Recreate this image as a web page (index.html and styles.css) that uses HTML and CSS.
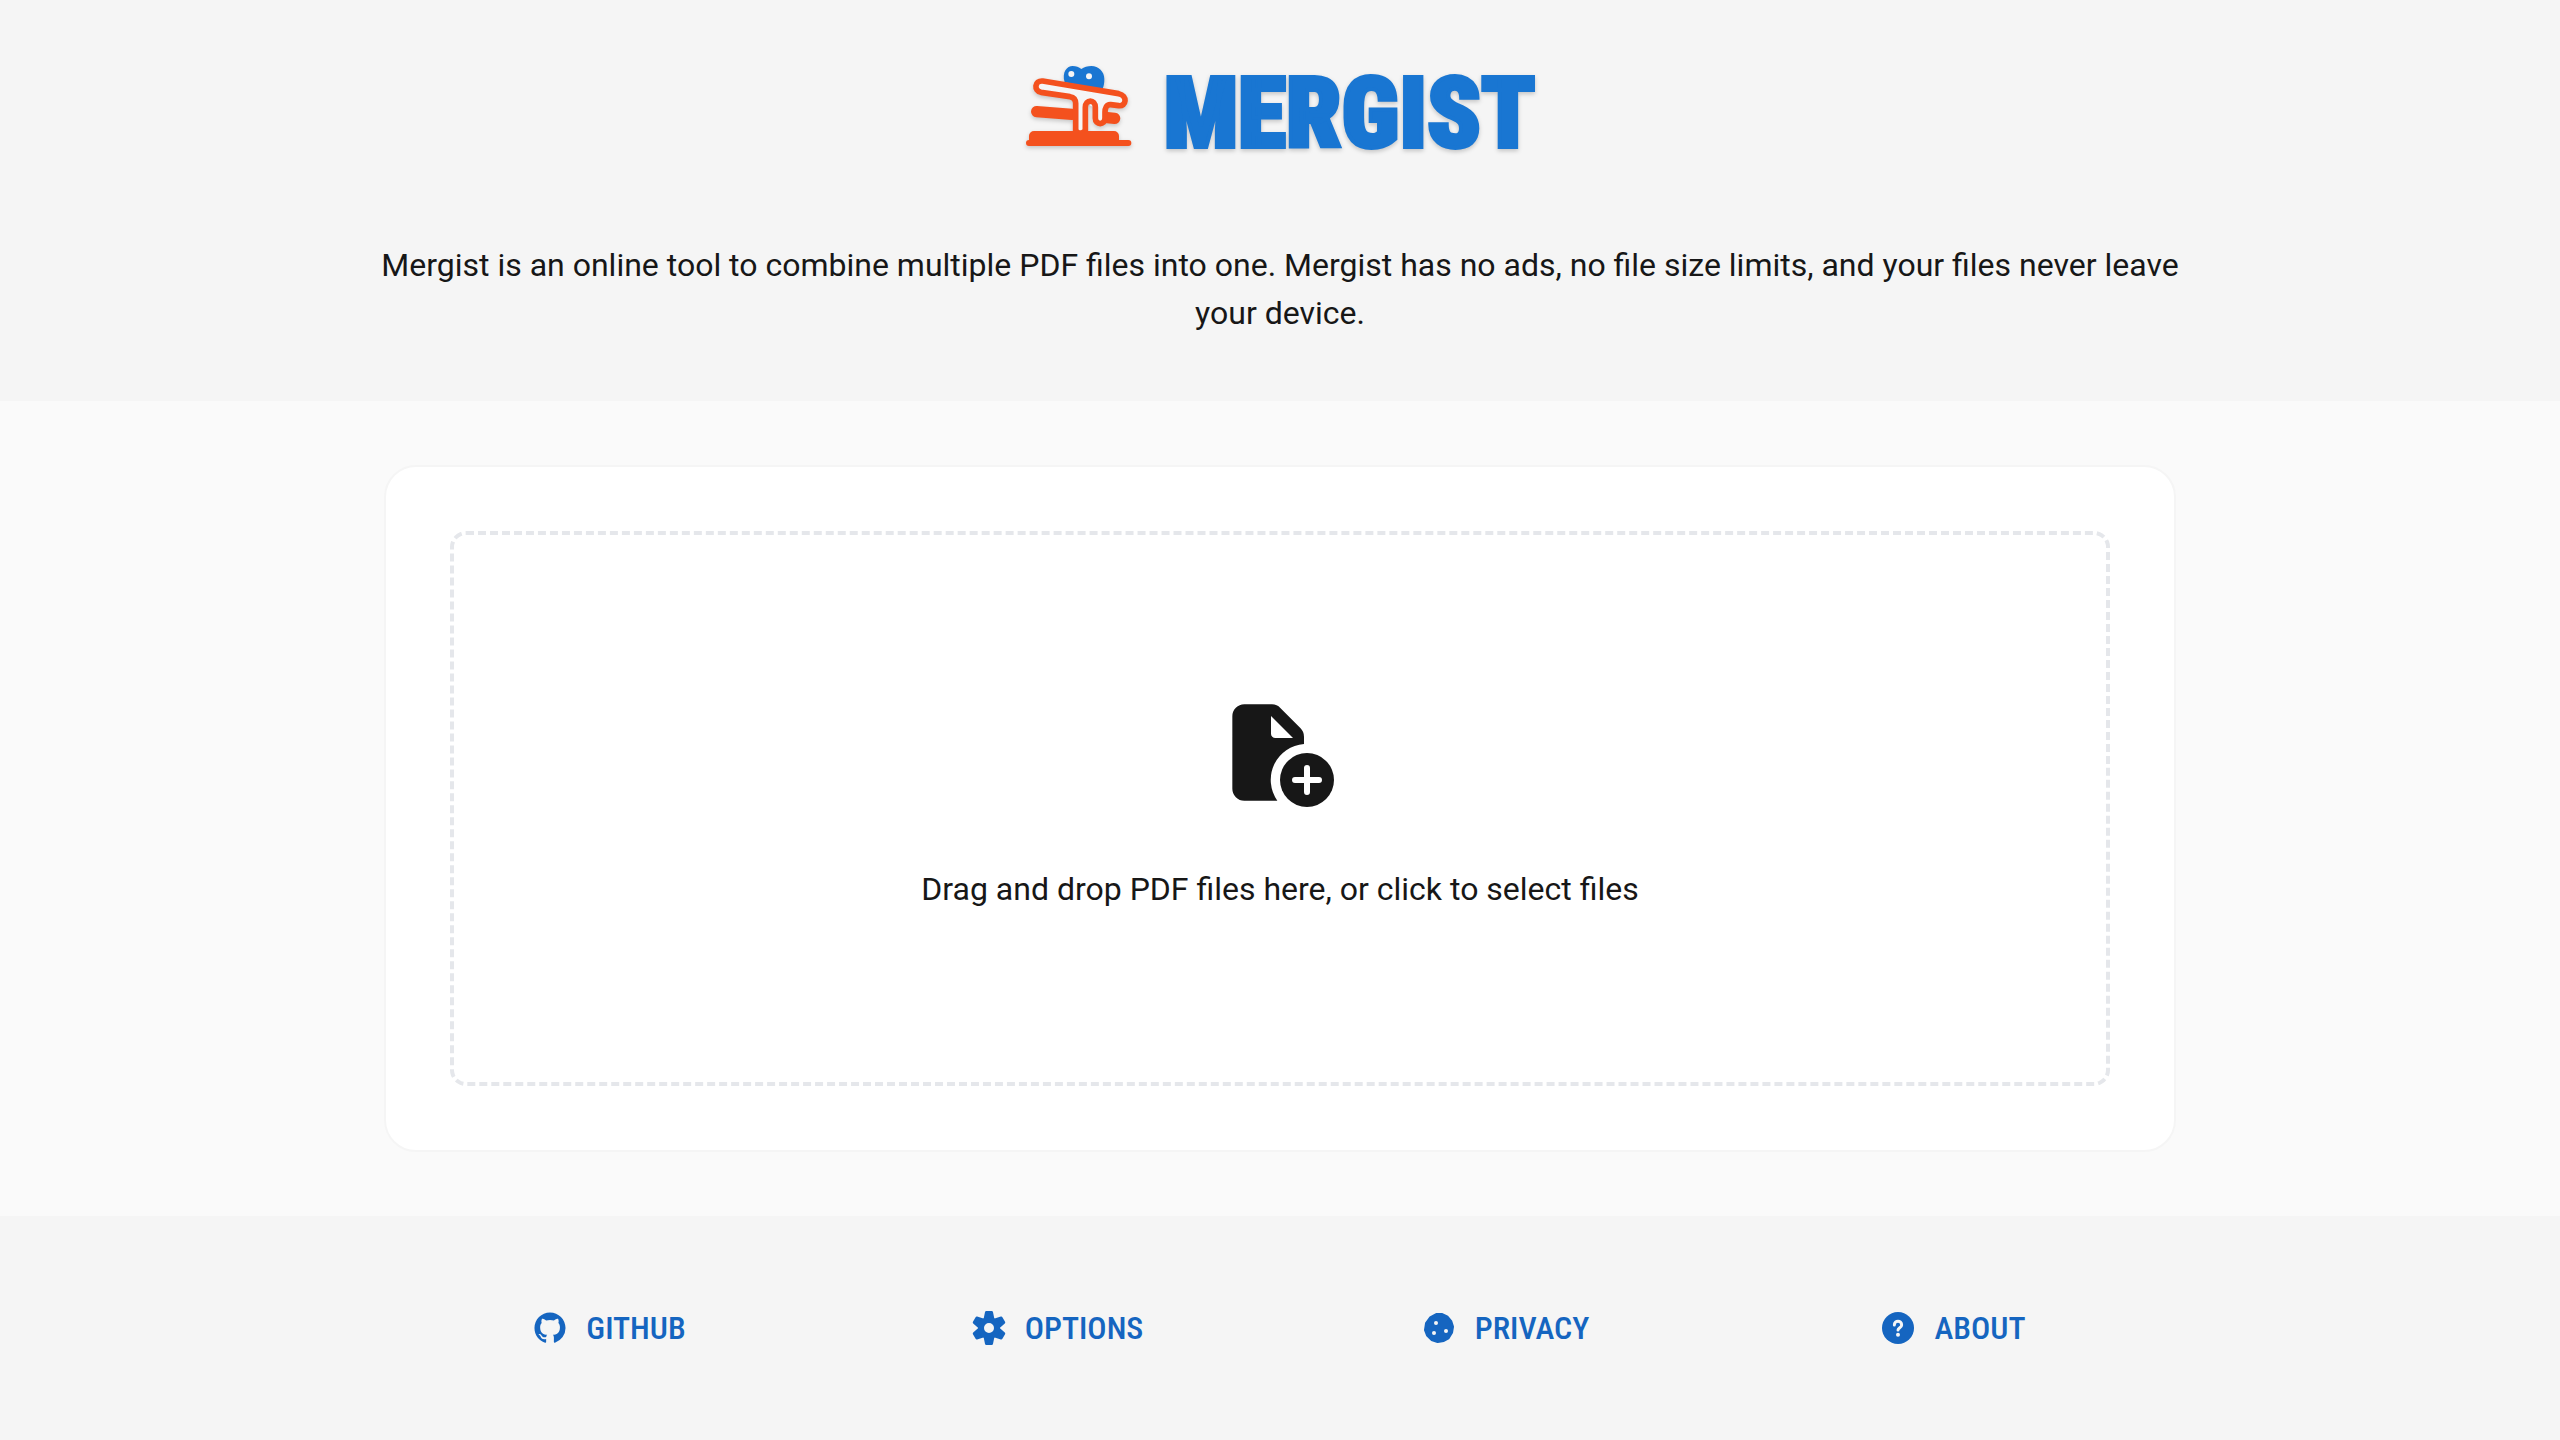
FILE: index.html
```html
<!DOCTYPE html>
<html lang="en">
<head>
    <meta charset="UTF-8">
    <meta name="viewport" content="width=device-width, initial-scale=1.0">
    <title>Mergist</title>
    <link rel="stylesheet" href="styles.css">
</head>
<body>
    <header class="header">
        <div class="container">
            <h1 class="brand">
                <svg class="brand-icon" viewBox="45 45 321 246" aria-hidden="true">
                    <!-- blueberries -->
                    <path fill="#1976d2" d="M164 97C155 66 171 48 188 48c10 0 19 3 26 9 8-6 19-9 30-9 22 0 39 17 39 39 0 12-1 20-6 31z"/>
                    <g fill="#f5f5f5">
                        <circle cx="184" cy="72" r="9"/>
                        <circle cx="237" cy="79" r="9"/>
                    </g>
                    <!-- crepe stack -->
                    <g fill="none" stroke="#f4511e" stroke-linecap="round">
                        <path stroke-width="34" d="M80 185l106 8M292 203l22 2"/>
                        <path stroke="#f5f5f5" fill="#f5f5f5" stroke-width="4" d="M211 150V236M240 165l16 2v38l15 16 14-16v-22z"/>
                        <path stroke-width="17" fill="#f5f5f5" stroke-linejoin="round" d="M197 250V160Q197 143 180 140L93 127C71 122 73 91 98 93L326 131C354 137 349 170 326 167L302 164C289 163 285 175 285 187V205C285 226 256 226 256 205V172C256 147 226 147 226 172V250"/>
                        <path stroke-width="12" d="M203 244q8 6 16 0"/>
                    </g>
                    <path fill="#f4511e" d="M72 243H312a15 15 0 0 1 15 15v12h28a9 9 0 0 1 0 18H57a9 9 0 0 1 0-18v-12a15 15 0 0 1 15-15z"/>
                </svg>
                <span class="brand-name">MERGIST</span>
            </h1>
            <p class="intro">Mergist is an online tool to combine multiple PDF files into one. Mergist has no ads, no file size limits, and your files never leave your device.</p>
        </div>
    </header>

    <main class="main">
        <div class="container">
            <div class="card">
                <input class="file-input" type="file" id="files" accept="application/pdf" multiple>
                <label class="dropzone" for="files">
                    <svg class="dropzone-icon" viewBox="60 36 360 360" aria-hidden="true">
                        <path fill="currentColor" fill-rule="evenodd" d="M133 73H216Q231 73 241 84L301 144Q312 155 312 170V192A108 108 0 0 0 232 362H133a36 36 0 0 1-36-36V109a36 36 0 0 1 36-36zM213 108V161a13 13 0 0 0 13 13H279z"/>
                        <circle cx="321" cy="300" r="81" fill="currentColor"/>
                        <path stroke="#fff" stroke-width="18" stroke-linecap="round" d="M285 300h72M321 264v72"/>
                    </svg>
                    <span>Drag and drop PDF files here, or click to select files</span>
                </label>
            </div>
        </div>
    </main>

    <footer class="footer">
        <nav class="container links">
            <a class="link" href="#github">
                <svg class="link-icon" viewBox="-2.3 -2.3 20.6 20.6" aria-hidden="true">
                    <path fill="currentColor" d="M8 0C3.58 0 0 3.58 0 8c0 3.54 2.29 6.53 5.47 7.59.4.07.55-.17.55-.38 0-.19-.01-.82-.01-1.49-2.01.37-2.53-.49-2.69-.94-.09-.23-.48-.94-.82-1.13-.28-.15-.68-.52-.01-.53.63-.01 1.08.58 1.23.82.72 1.21 1.87.87 2.33.66.07-.52.28-.87.51-1.07-1.78-.2-3.64-.89-3.64-3.95 0-.87.31-1.59.82-2.15-.08-.2-.36-1.02.08-2.12 0 0 .67-.21 2.2.82.64-.18 1.32-.27 2-.27s1.36.09 2 .27c1.53-1.04 2.2-.82 2.2-.82.44 1.1.16 1.92.08 2.12.51.56.82 1.27.82 2.15 0 3.07-1.87 3.75-3.65 3.95.29.25.54.73.54 1.48 0 1.07-.01 1.93-.01 2.2 0 .21.15.46.55.38A8.01 8.01 0 0 0 16 8c0-4.42-3.58-8-8-8z"/>
                </svg>
                GITHUB
            </a>
            <a class="link" href="#options">
                <svg class="link-icon" viewBox="-60 -60 120 120" aria-hidden="true">
                    <defs>
                        <path id="tooth" d="M-8-47H8L12-28H-12z"/>
                    </defs>
                    <g fill="currentColor" stroke="currentColor" stroke-width="8" stroke-linejoin="round">
                        <use href="#tooth"/>
                        <use href="#tooth" transform="rotate(60)"/>
                        <use href="#tooth" transform="rotate(120)"/>
                        <use href="#tooth" transform="rotate(180)"/>
                        <use href="#tooth" transform="rotate(240)"/>
                        <use href="#tooth" transform="rotate(300)"/>
                    </g>
                    <circle r="24" fill="none" stroke="currentColor" stroke-width="18"/>
                </svg>
                OPTIONS
            </a>
            <a class="link" href="#privacy">
                <svg class="link-icon" viewBox="-60 -60 120 120" aria-hidden="true">
                    <path fill="currentColor" stroke="currentColor" stroke-width="8" stroke-linejoin="round" d="M-8-41L8-41 24-34 36-20 41-4 38 14 28 30 14 38-4 41-22 35-35 22-41 6-38-14-26-31z"/>
                    <g fill="#f5f5f5">
                        <circle cx="-9" cy="-15" r="6"/>
                        <circle cx="-15" cy="15" r="6"/>
                        <circle cx="21" cy="9" r="6"/>
                    </g>
                </svg>
                PRIVACY
            </a>
            <a class="link" href="#about">
                <svg class="link-icon" viewBox="-60 -60 120 120" aria-hidden="true">
                    <circle r="48" fill="currentColor"/>
                    <path fill="none" stroke="#f5f5f5" stroke-width="9" stroke-linecap="round" d="M-11-9C-11-24 11-24 11-9 11-1 0-1 0 6"/>
                    <circle cy="20" r="6" fill="#f5f5f5"/>
                </svg>
                ABOUT
            </a>
        </nav>
    </footer>
</body>
</html>
```
FILE: styles.css
```css
* {
    box-sizing: border-box;
}
body {
    margin: 0;
    min-height: 100vh;
    display: flex;
    flex-direction: column;
    background-color: #fafafa;
    color: #171717;
    font-family: Roboto, sans-serif;
    font-size: 32px;
    line-height: 48px;
}
.container {
    width: 70%;
    margin: 0 auto;
}
.header {
    padding: 64px 0;
    background-color: #f5f5f5;
    text-align: center;
}
.brand {
    display: flex;
    justify-content: center;
    align-items: center;
    gap: 32px;
    height: 96px;
    margin: 0 0 81px;
}
.brand-icon {
    width: 107px;
    height: 82px;
    margin-bottom: 12px;
    filter: drop-shadow(0 2px 2px rgba(0, 0, 0, 0.2));
}
.brand-name {
    padding-top: 4px;
    color: #1976d2;
    font-family: "Roboto Condensed", Roboto, sans-serif;
    font-size: 98px;
    font-weight: 900;
    line-height: 96px;
    -webkit-text-stroke: 4px #1976d2;
    filter: drop-shadow(0 2px 2px rgba(0, 0, 0, 0.2));
}
.intro {
    margin: 0 -8px;
}
.main {
    flex: 1;
    padding: 64px 0;
}
.card {
    padding: 64px;
    border: 2px solid #f5f5f5;
    border-radius: 32px;
    background-color: #fff;
}
.file-input {
    position: absolute;
    width: 1px;
    height: 1px;
    opacity: 0;
}
.dropzone {
    display: flex;
    flex-direction: column;
    align-items: center;
    gap: 53px;
    padding: 157px 32px 169px;
    border: 4px dashed #e5e7eb;
    border-radius: 16px;
    text-align: center;
    cursor: pointer;
}
.dropzone-icon {
    width: 120px;
    height: 120px;
}
.footer {
    padding: 88px 0;
    background-color: #f5f5f5;
}
.links {
    display: grid;
    grid-template-columns: repeat(4, 1fr);
}
.link {
    display: flex;
    justify-content: center;
    align-items: center;
    gap: 16px;
    color: #1565c0;
    font-family: "Roboto Condensed", Roboto, sans-serif;
    font-weight: 500;
    text-decoration: none;
}
.link-icon {
    width: 40px;
    height: 40px;
}
```
